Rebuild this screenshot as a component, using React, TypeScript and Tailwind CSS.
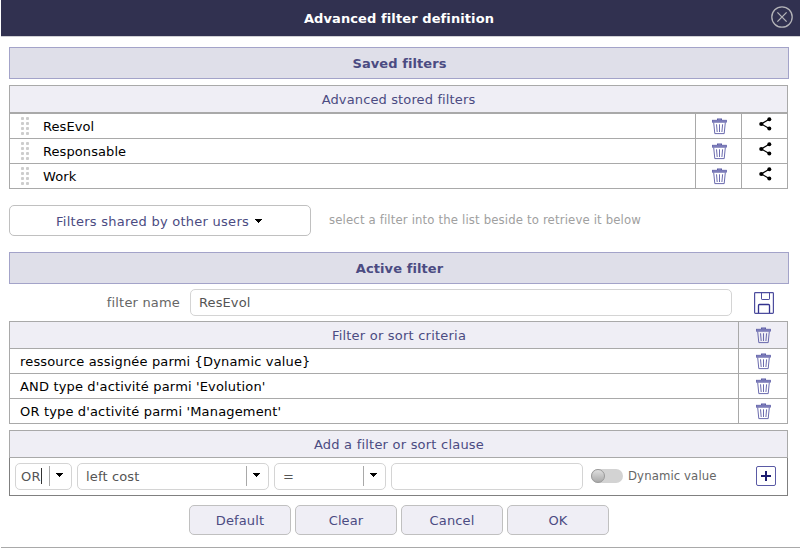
import React from "react";

function Trash() {
  return (
    <svg width="16" height="17" viewBox="0 0 16 17" fill="none" stroke="#5a5aa5" className="block">
      <path d="M5.6 2V1.1h3.8V2" strokeWidth="1.2" />
      <rect x="0.4" y="2.2" width="14.2" height="2" fill="#8484be" strokeWidth="0.7" />
      <path d="M1.7 4.6l1.1 11h9.4l1.1-11" strokeWidth="0.9" />
      <path d="M4.5 6.3l.7 7.7M7.5 6.3V14M10.6 6.3l-.7 7.7" strokeWidth="0.9" />
    </svg>
  );
}

function Share() {
  return (
    <svg width="13" height="14" viewBox="0 0 13 14" className="block">
      <path d="M10.2 2.2L2.3 7l7.9 4.6" fill="none" stroke="#000" strokeWidth="1.2" />
      <circle cx="10.3" cy="2.2" r="2" />
      <circle cx="2.3" cy="7" r="2.1" />
      <circle cx="10.3" cy="11.6" r="2" />
    </svg>
  );
}

function Grip() {
  return (
    <svg width="9" height="18" viewBox="0 0 9 18" fill="#cdcdcd" className="block">
      {[0, 5, 10, 15].map((y) => (
        <React.Fragment key={y}>
          <rect x="0" y={y} width="3" height="3" rx="0.9" />
          <rect x="5" y={y} width="3" height="3" rx="0.9" />
        </React.Fragment>
      ))}
    </svg>
  );
}

function Caret() {
  return (
    <svg width="7" height="4" viewBox="0 0 7 4" className="block" shapeRendering="crispEdges">
      <path d="M0 0h7v1H6v1H5v1H4v1H3V3H2V2H1V1H0z" />
    </svg>
  );
}

function Save() {
  return (
    <svg width="20" height="22" viewBox="0 0 20 22" fill="none" stroke="#4d4d9e" className="block">
      <rect x="0.6" y="0.6" width="18.8" height="20.8" rx="0.8" strokeWidth="1.2" />
      <path d="M7.5 1v5.9q0 .6.6.6h6.8q.6 0 .6-.6V1" strokeWidth="1" />
      <path d="M4.5 21v-7.5q0-1 1-1h9q1 0 1 1V21" strokeWidth="1.3" stroke="#33338f" />
    </svg>
  );
}

function SectionTitle({ children }: { children: string }) {
  return (
    <div className="mx-[9px] flex h-8 w-[780px] items-center justify-center border border-[#a3a3c9] bg-[#dfdfe9] pt-[2px] pl-px font-bold tracking-[0.08px] text-[#4b4b82]">
      <span>{children}</span>
    </div>
  );
}

function Combo({ value, className, caret }: { value: string; className: string; caret?: boolean }) {
  return (
    <div className={"flex h-[27px] items-center rounded-[5px] border border-[#d4d4d4] bg-white text-[#555] " + className}>
      <span>{value}</span>
      {caret && <span className="mb-px h-4 w-px bg-[#333]" />}
      <span className="mb-[2px] ml-auto h-5 w-px bg-[#a9a9a9]" />
      <span className="mr-[8px] ml-[6px] pb-[3px]">
        <Caret />
      </span>
    </div>
  );
}

export default function App() {
  const stored = ["ResEvol", "Responsable", "Work"];
  const criteria = [
    "ressource assignée parmi {Dynamic value}",
    "AND type d'activité parmi 'Evolution'",
    "OR type d'activité parmi 'Management'",
  ];
  return (
    <div className="relative flex h-[548px] w-[800px] flex-col overflow-hidden bg-white pl-px font-['DejaVu_Sans',sans-serif] text-[13px] leading-4 whitespace-nowrap text-black">
      <header className="flex h-[37px] shrink-0 items-center border-b border-[#d0d0d4] bg-[#313150] pr-[7px] font-bold text-white">
        <div className="ml-[26px] flex-1 pt-[2px] text-center tracking-[0.1px]">
          <span>Advanced filter definition</span>
        </div>
        <svg width="22" height="22" viewBox="0 0 22 22" fill="none" stroke="#b4b4b8" strokeWidth="1.3" className="mb-[3px]">
          <circle cx="11" cy="11" r="10.2" />
          <path d="M6.4 6.4l9.2 9.2M15.6 6.4l-9.2 9.2" />
        </svg>
      </header>

      <main className="-ml-px flex flex-col">
        <div className="pt-[10px]">
          <SectionTitle>Saved filters</SectionTitle>
        </div>

        <section className="mt-[6px] ml-[9px] w-[779px] border border-[#a9a9a9]">
          <div className="flex h-[28px] items-center justify-center border-b-2 border-[#a9a9a9] bg-[#efeef5] pt-[2px] tracking-[0.13px] text-[#4b4b82]">
            <span>Advanced stored filters</span>
          </div>
          {stored.map((name) => (
            <div key={name} className="flex h-[25px] border-b border-[#a9a9a9] last:h-6 last:border-b-0">
              <div className="flex flex-1 items-center pl-[11px]">
                <Grip />
                <span className="ml-[13px] pt-[2px] tracking-[0.08px]">{name}</span>
              </div>
              <div className="flex w-[46px] items-center justify-center border-l border-[#a9a9a9] pt-px pl-[3px]">
                <Trash />
              </div>
              <div className="flex w-[46px] items-center justify-center border-l border-[#a9a9a9] pb-[4px] pl-[2px]">
                <Share />
              </div>
            </div>
          ))}
        </section>

        <div className="mt-[16px] ml-[9px] flex h-[31px]">
          <button className="flex w-[302px] items-center justify-center gap-[6px] rounded-[5px] border border-[#c0c0c0] pt-[2px] pr-[2px] tracking-[0.26px] text-[#4b4b82]">
            <span>Filters shared by other users</span>
            <span className="pb-[2px]">
              <Caret />
            </span>
          </button>
          <span className="mt-[7px] ml-[18px] font-['DejaVu_Sans_Condensed','DejaVu_Sans',sans-serif] text-[13px] tracking-[0.15px] text-[#a0a0a0]">
            select a filter into the list beside to retrieve it below
          </span>
        </div>

        <div className="pt-[16px]">
          <SectionTitle>Active filter</SectionTitle>
        </div>

        <div className="mt-[5px] flex h-[27px] items-center">
          <span className="w-[180px] text-right tracking-[0.18px] text-[#666]">filter name</span>
          <div className="ml-[10px] flex h-[27px] w-[542px] items-center rounded-[5px] border border-[#d4d4d4] pl-[8px] tracking-[0.1px] text-[#555]">
            <span>ResEvol</span>
          </div>
          <div className="ml-[22px]">
            <Save />
          </div>
        </div>

        <section className="mt-[5px] ml-[9px] w-[779px] border border-[#a9a9a9]">
          <div className="flex h-[27px] border-b border-[#a9a9a9] bg-[#efeef5] text-[#4b4b82]">
            <div className="flex flex-1 items-center justify-center pt-[2px] pl-[50px] tracking-[0.22px]">
              <span>Filter or sort criteria</span>
            </div>
            <div className="flex w-[49px] items-center justify-center border-l border-[#a9a9a9] pl-px">
              <Trash />
            </div>
          </div>
          {criteria.map((text) => (
            <div key={text} className="flex h-[25px] border-b border-[#a9a9a9] last:h-6 last:border-b-0">
              <div className="flex flex-1 items-center pt-[2px] pl-[10px]">
                <span className="tracking-[0.16px]">{text}</span>
              </div>
              <div className="flex w-[49px] items-center justify-center border-l border-[#a9a9a9] pl-px">
                <Trash />
              </div>
            </div>
          ))}
        </section>

        <section className="mt-[6px] ml-[9px] w-[779px]">
          <div className="flex h-[28px] items-center justify-center border border-[#a9a9a9] bg-[#efeef5] pt-[2px] pl-px tracking-[0.22px] text-[#4b4b82]">
            <span>Add a filter or sort clause</span>
          </div>
          <div className="flex h-[38px] items-center border border-t-0 border-[#808080] pl-[5px]">
            <Combo value="OR" className="w-[57px] pl-[5px] tracking-[0.3px]" caret />
            <Combo value="left cost" className="ml-[5px] w-[192px] pl-[8px] tracking-[0.15px]" />
            <Combo value="=" className="ml-[5px] w-[112px] pl-[8px]" />
            <div className="ml-[5px] h-[27px] w-[192px] rounded-[5px] border border-[#d4d4d4]" />
            <div className="mb-[2px] ml-[8px] h-[14px] w-8 rounded-full bg-[#d3d3d3]">
              <div className="h-[14px] w-[14px] rounded-full border border-[#999] bg-linear-to-b from-[#dedede] to-[#aaa]" />
            </div>
            <span className="mb-[2px] ml-[5px] font-['DejaVu_Sans_Condensed','DejaVu_Sans',sans-serif] text-[13px] tracking-[0.1px] text-[#666]">
              Dynamic value
            </span>
            <div className="mr-[11px] mb-[2px] ml-auto flex h-5 w-5 items-center justify-center rounded-[2px] border border-[#5a5aa5]">
              <svg width="10" height="10" viewBox="0 0 10 10" className="block" stroke="#1c1c70" strokeWidth="2">
                <path d="M5 0v10M0 5h10" />
              </svg>
            </div>
          </div>
        </section>

        <div className="mt-[9px] ml-[189px] flex gap-[4px]">
          {["Default", "Clear", "Cancel", "OK"].map((label) => (
            <button key={label} className="flex h-[30px] w-[102px] items-center justify-center rounded-[5px] border border-[#c0c0c0] bg-[#efeef5] pt-[2px] tracking-[0.13px] text-[#4b4b82]">
              <span>{label}</span>
            </button>
          ))}
        </div>
      </main>
      <div className="mt-auto h-px shrink-0 bg-[#a9a9a9]" />
    </div>
  );
}
